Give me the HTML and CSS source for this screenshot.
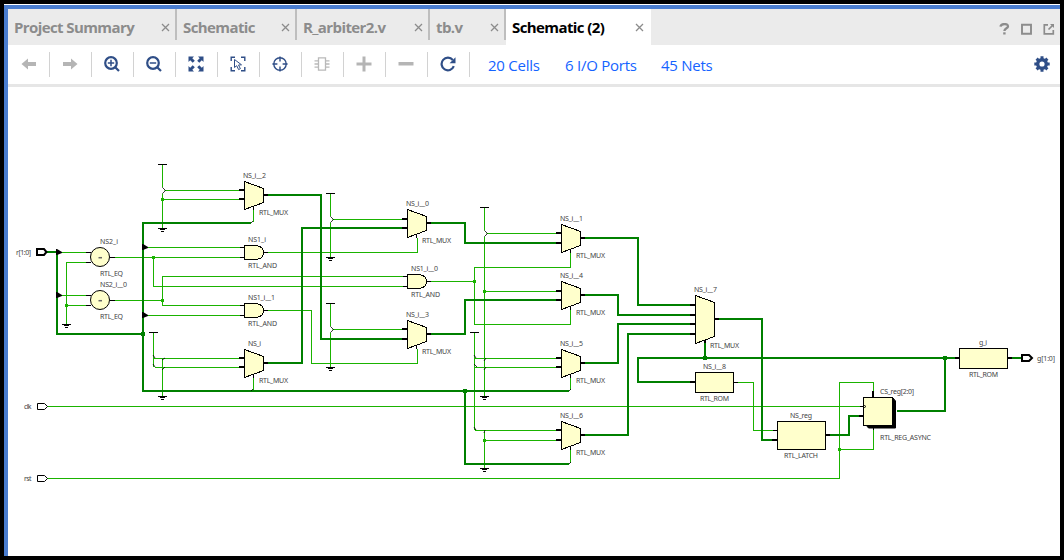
FILE: index.html
```html
<!DOCTYPE html>
<html lang="en">
<head>
<meta charset="utf-8">
<title>Schematic (2)</title>
<link rel="stylesheet" href="styles.css">
</head>
<body>
<main class="window">
  <header class="tabs">
    <div class="tab tab-summary"><span>Project Summary</span><svg class="close" viewBox="0 0 9 9"><path d="M1 1l7 7M8 1l-7 7"/></svg></div>
    <div class="tab tab-schematic"><span>Schematic</span><svg class="close" viewBox="0 0 9 9"><path d="M1 1l7 7M8 1l-7 7"/></svg></div>
    <div class="tab tab-arbiter"><span>R_arbiter2.v</span><svg class="close" viewBox="0 0 9 9"><path d="M1 1l7 7M8 1l-7 7"/></svg></div>
    <div class="tab tab-tb"><span>tb.v</span><svg class="close" viewBox="0 0 9 9"><path d="M1 1l7 7M8 1l-7 7"/></svg></div>
    <div class="tab tab-active"><span>Schematic (2)</span><svg class="close" viewBox="0 0 9 9"><path d="M1 1l7 7M8 1l-7 7"/></svg></div>
    <div class="window-actions">
      <svg width="11" height="12" viewBox="0 0 11 12"><path d="M1.500 3.600C2 .2 9 .2 9 3.400 9 5.400 5.400 5.200 5.400 8" fill="none" stroke="#8c8c8c" stroke-width="2.300"/><path d="M4.200 9.300h2.400v2.200H4.200z" fill="#8c8c8c"/></svg>
      <svg width="11" height="12" viewBox="0 0 11 12"><path d="M1 1.800h9v9H1z" fill="none" stroke="#8c8c8c" stroke-width="1.900"/></svg>
      <svg width="12" height="12" viewBox="0 0 12 12"><path d="M5 1.800H1.300v9h9V7M5.500 6.500l4-4" fill="none" stroke="#8c8c8c" stroke-width="1.700"/><path d="M7 1h4v4z" fill="#8c8c8c"/></svg>
    </div>
  </header>
  <nav class="toolbar">
    <div class="tool"><svg viewBox="0 0 16 16"><path class="off" d="M.5 8L7 2.500V6h8v4H7v3.500z"/></svg></div>
    <div class="tool"><svg viewBox="0 0 16 16"><path class="off" d="M15.500 8L9 2.500V6H1v4h8v3.500z"/></svg></div>
    <div class="tool"><svg viewBox="0 0 16 16"><circle class="line" cx="7" cy="7" r="5.800"/><path class="line" d="M11.200 11.200L15 15"/><path class="line thin" d="M3.800 7h6.400M7 3.800v6.400"/></svg></div>
    <div class="tool"><svg viewBox="0 0 16 16"><circle class="line" cx="7" cy="7" r="5.800"/><path class="line" d="M11.200 11.200L15 15"/><path class="line thin" d="M3.800 7h6.400"/></svg></div>
    <div class="tool"><svg viewBox="0 0 16 16"><path class="ink" d="M.5.5H6L4.300 2.200 6.800 4.700 4.700 6.800 2.200 4.300.5 6zM15.500.5V6l-1.700-1.700-2.500 2.500-2.100-2.100 2.500-2.500L10 .5zM.5 15.500V10l1.700 1.700 2.500-2.500 2.100 2.100-2.500 2.500L6 15.500zM15.500 15.500H10l1.700-1.700-2.500-2.500 2.100-2.100 2.500 2.500L15.500 10z"/></svg></div>
    <div class="tool"><svg viewBox="0 0 16 16"><path class="line mid" d="M1.200 5V1.200H5M11 1.200h3.800V5M1.200 11v3.800H5M14.800 11v3.800H11"/><path class="line fine" d="M4.500 3.500v8l2.200-1.800 1.900 3.900 1.800-.9-1.900-3.700 3-.2z"/></svg></div>
    <div class="tool"><svg viewBox="0 0 16 16"><circle class="line mid" cx="8" cy="8" r="6.200"/><path class="line mid" d="M8 .4v5M8 10.600v5M.4 8h5M10.600 8h5"/></svg></div>
    <div class="tool"><svg viewBox="0 0 16 16"><path class="chip" d="M4.500 1.800h7v12.400h-7zM4 4.800H.5M4 8H.5M4 11.200H.5M12 4.800h3.500M12 8h3.500M12 11.200h3.500"/></svg></div>
    <div class="tool"><svg viewBox="0 0 16 16"><path class="off" d="M6.500.5h3v6h6v3h-6v6h-3v-6h-6v-3h6z"/></svg></div>
    <div class="tool"><svg viewBox="0 0 16 16"><path class="off" d="M.5 6h15v3.500H.5z"/></svg></div>
    <div class="tool"><svg viewBox="0 0 16 16"><path class="line" d="M13.800 10.200A6.300 6.300 0 1 1 12.800 4"/><path class="ink" d="M15.500 1.300v5.900H9.600z"/></svg></div>
    <div class="counts"><a class="cells">20 Cells</a><a class="ports">6 I/O Ports</a><a>45 Nets</a></div>
    <svg class="gear" viewBox="0 0 16 16"><circle cx="8" cy="8" r="4.300" fill="none" stroke="#2f4e87" stroke-width="3.400"/><path d="M8 .3v3M8 12.700v3M.3 8h3M12.700 8h3M2.600 2.600l2 2M11.400 11.400l2 2M2.600 13.400l2-2M11.400 4.600l2-2" stroke="#2f4e87" stroke-width="3"/></svg>
  </nav>
  <svg class="canvas" viewBox="8 87 1052 469">
    <defs>
      <g id="mux"><path class="cell" d="M.5.5V28.500L19.500 21.500V7.500z"/><path class="bus-pin" d="M20 14h4"/><path class="pin" d="M9.500 25v4"/></g>
      <g id="and"><path class="cell" d="M.5.5h12q7 1 7 7t-7 7H.5z"/><path class="pin" d="M-4 2.500h4M-4 12.500h4M20 7.500h4"/></g>
      <g id="eq"><circle class="cell round" r="9.500"/><path class="pin" d="M-14-4.500h5M-14 5.500h5M10 .5h5"/><path class="equals" d="M-1.500 .7h3.500"/></g>
      <g id="vcc"><path class="pin" d="M-4.500 0h9"/></g>
      <g id="gnd"><path class="pin" d="M-4.500 0h9M-2.500 1h5M-1.500 3h3"/></g>
      <g id="dot"><path class="dot" d="M-1.500-1.500h3v3h-3z"/></g>
      <g id="tap"><path d="M0-3h1L6 0v1L1 3H0z"/></g>
      <g id="split"><path class="gap" d="M-1-3h3v6h-3z"/><path class="rip" d="M0-3L3 0 0 3"/></g>
      <g id="port"><path class="port" d="M0-3h7l3 3-3 3H0z"/></g>
    </defs>

    <g class="net">
      <path d="M60 252.500H87M87 262.500H66.500V324M60 295.500H87M66.500 305.500H87M114 257.500H241M153.500 257.500V286.500H404M114 300.500H162.500M241 305.500H162.500V276.500H404M146 247.500H241M146 315.500H241"/>
      <path d="M162.500 165V229M163 190.500H240M162.500 199.500H240M253.500 209V222M153.500 333V367M153.500 358.500H240M155 367.500H240M162.500 359V396M253.500 378V391"/>
      <path d="M330.500 194V257M332 219.500H403M268 252.500H417.500V238M330.500 304V367M332 329.500H403M268 310.500H311.500V363.500H417.500V349M431 281.500H474.500M570.500 253V267.500H474.500V324.500H570.500V310"/>
      <path d="M484.500 208V396M486 233.500H557M484.500 291.500H557M474.500 333V429L476 430.500H557M475 358.500H557M475 367.500H557M484.500 432V468M484.500 440.500H557M570.500 378V390M570.500 450V463"/>
      <path d="M47 406.500H861M47 478.500H839.500V382.500H873.500V392M839.500 449.500H873.500V430M738 382.500H753.500V430.500H773"/>
    </g>
    <g class="bus">
      <path d="M47 252H57V334H143M251 223H143V391H569M465 391V464H569"/>
      <path d="M268 195H321V339H403M268 363H302V228H403M431 223H465V243H557M431 334H465V300H557"/>
      <path d="M585 238H638V305H691M585 295H618V315H691M585 363H618V324H691M585 435H628V334H691M719 319H762V440H773"/>
      <path d="M705 343V358M691 382H638V358H956M830 435H849V416H859M897 411H945V358M1012 358H1021"/>
    </g>

    <use href="#mux" x="244" y="181"/><use href="#mux" x="244" y="349"/>
    <use href="#mux" x="407" y="209"/><use href="#mux" x="407" y="320"/>
    <use href="#mux" x="561" y="224"/><use href="#mux" x="561" y="281"/><use href="#mux" x="561" y="349"/><use href="#mux" x="561" y="421"/>
    <use href="#and" x="244" y="245"/><use href="#and" x="244" y="303"/><use href="#and" x="407" y="274"/>
    <use href="#eq" x="100" y="257"/><use href="#eq" x="100" y="300"/>
    <path class="cell" d="M695.500 295.500V343.500L714.500 336.500V302.500zM695.500 372.500h38v20h-38zM777.500 421.500h48v28h-48zM959.500 348.500h48v20h-48z"/>
    <path d="M866 425h27v-27l2.500 3v27h-27z" stroke="#000"/>
    <path class="cell" d="M863.500 397.500h29v28h-29z"/>
    <path class="rip" d="M863 404.500l3 2-3 2"/>
    <path class="bus-pin" d="M239 190h5M239 199h5M239 358h5M239 367h5M402 219h5M402 228h5M402 329h5M402 339h5M556 233h5M556 243h5M556 291h5M556 300h5M556 358h5M556 367h5M556 430h5M556 440h5M690 305h5M690 315h5M690 324h5M690 334h5M715 319h4M705 340v3M690 382h5M772 440h5M826 435h4M859 416h4M873 391v6M955 358h4M1008 358h4"/>
    <path class="pin" d="M734 382.500h4M773 430.500h4M860 406.500h4M873.500 428v2"/>
    <path class="rip" d="M251 223l2-2M251 391l2-2M569 391l2-2M569 464l2-2M153 355l2 3M153 364l2 3M162 360l3-2M162 370l3-3M474 355l2 3M474 364l3 3M484 361l2-3M484 370l2-3M474 427l2 3M484 433l1-3"/>

    <use href="#vcc" x="162.500" y="164.500"/><use href="#vcc" x="153.500" y="332.500"/><use href="#vcc" x="330.500" y="193.500"/><use href="#vcc" x="330.500" y="303.500"/><use href="#vcc" x="484.500" y="207.500"/><use href="#vcc" x="474.500" y="332.500"/>
    <use href="#gnd" x="66.500" y="324.500"/><use href="#gnd" x="162.500" y="228.500"/><use href="#gnd" x="162.500" y="396.500"/><use href="#gnd" x="330.500" y="257.500"/><use href="#gnd" x="330.500" y="367.500"/><use href="#gnd" x="484.500" y="396.500"/><use href="#gnd" x="484.500" y="468.500"/>
    <use href="#split" x="162.500" y="190.500"/><use href="#split" x="330.500" y="219.500"/><use href="#split" x="330.500" y="329.500"/><use href="#split" x="484.500" y="233.500"/>
    <use href="#dot" x="162.500" y="199.500"/><use href="#dot" x="153.500" y="257.500"/><use href="#dot" x="162.500" y="300.500"/><use href="#dot" x="66.500" y="305.500"/><use href="#dot" x="474.500" y="281.500"/><use href="#dot" x="484.500" y="291.500"/><use href="#dot" x="484.500" y="440.500"/><use href="#dot" x="839.500" y="449.500"/>
    <path class="bus-dot" d="M141 332h4v4h-4zM463 389h4v4h-4zM703 356h4v4h-4zM943 356h4v4h-4z"/>
    <use href="#tap" x="56" y="252"/><use href="#tap" x="56" y="295"/><use href="#tap" x="142" y="247"/><use href="#tap" x="142" y="315"/>
    <use href="#port" x="37.500" y="406.500"/><use href="#port" x="37.500" y="478.500"/>
    <path class="port bold" d="M37 249h7l2.500 3-2.500 3h-7zM1022 355h7l3 3-3 3h-7z"/>

    <g class="labels">
      <text x="16" y="255" textLength="15">r[1:0]</text><text x="24" y="409" textLength="7.500">clk</text><text x="24" y="481" textLength="7.500">rst</text>
      <text x="100" y="244" textLength="18">NS2_i</text><text x="100" y="276" textLength="23">RTL_EQ</text>
      <text x="100" y="287" textLength="27">NS2_i__0</text><text x="100" y="319" textLength="23">RTL_EQ</text>
      <text x="243" y="178" textLength="23">NS_i__2</text><text x="259" y="215" textLength="29">RTL_MUX</text>
      <text x="248" y="242" textLength="18">NS1_i</text><text x="248" y="268" textLength="29">RTL_AND</text>
      <text x="248" y="300" textLength="27">NS1_i__1</text><text x="248" y="326" textLength="29">RTL_AND</text>
      <text x="248" y="346" textLength="13">NS_i</text><text x="259" y="383" textLength="29">RTL_MUX</text>
      <text x="406" y="206" textLength="23">NS_i__0</text><text x="422" y="243" textLength="29">RTL_MUX</text>
      <text x="411" y="271" textLength="27">NS1_i__0</text><text x="411" y="297" textLength="29">RTL_AND</text>
      <text x="406" y="317" textLength="23">NS_i__3</text><text x="422" y="354" textLength="29">RTL_MUX</text>
      <text x="560" y="221" textLength="23">NS_i__1</text><text x="576" y="258" textLength="29">RTL_MUX</text>
      <text x="560" y="278" textLength="23">NS_i__4</text><text x="576" y="315" textLength="29">RTL_MUX</text>
      <text x="560" y="346" textLength="23">NS_i__5</text><text x="576" y="383" textLength="29">RTL_MUX</text>
      <text x="560" y="418" textLength="23">NS_i__6</text><text x="576" y="455" textLength="29">RTL_MUX</text>
      <text x="694" y="292" textLength="23">NS_i__7</text><text x="710" y="348" textLength="29">RTL_MUX</text>
      <text x="703" y="369" textLength="23">NS_i__8</text><text x="700" y="401" textLength="29">RTL_ROM</text>
      <text x="790" y="418" textLength="22">NS_reg</text><text x="784" y="458" textLength="34">RTL_LATCH</text>
      <text x="880" y="394" textLength="34">CS_reg[2:0]</text><text x="880" y="440" textLength="51">RTL_REG_ASYNC</text>
      <text x="979" y="345" textLength="8">g_i</text><text x="969" y="377" textLength="29">RTL_ROM</text><text x="1037" y="361" textLength="18">g[1:0]</text>
    </g>
  </svg>
</main>
</body>
</html>
```
FILE: styles.css
```css
* { box-sizing: border-box; }
body {
  margin: 0;
  width: 1064px;
  height: 560px;
  padding: 4px;
  background: #000;
  font-family: "Open Sans", "Noto Sans", sans-serif;
}
.window {
  display: flex;
  flex-direction: column;
  height: 552px;
  border-top: 1px solid #fff;
  background: #4a7dcf;
  padding: 4px 0 0 4px;
}
.tabs {
  display: flex;
  height: 36px;
  background: #ebebeb;
  font-size: 15px;
  font-weight: 700;
  line-height: 36px;
  color: #8c8c8c;
}
.tab {
  display: flex;
  align-items: center;
  justify-content: space-between;
  height: 36px;
  padding: 0 7px 0 6px;
  white-space: nowrap;
  background: linear-gradient(#bebebe, #bebebe) no-repeat 100% 0 / 2px 31px;
}
.tab span { letter-spacing: -0.6px; }
.tab-summary { width: 169px; }
.tab-schematic { width: 120px; }
.tab-arbiter { width: 133px; }
.tab-tb { width: 76px; }
.tab-active { width: 145px; background: #fff; color: #000; }
.close { width: 9px; height: 9px; fill: none; stroke: #8c8c8c; stroke-width: 1.3; }
.window-actions { display: flex; gap: 11px; margin-left: auto; padding: 14px 5px 0 0; height: 26px; }
.toolbar {
  display: flex;
  align-items: center;
  height: 42px;
  padding-right: 10px;
  background: #fff;
  border-bottom: 3px solid #e6e6e6;
}
.tool { display: grid; place-items: center; width: 42px; height: 25px; border-right: 1px solid #d2d2d2; }
.tool svg, .gear { width: 16px; height: 16px; margin-bottom: 1px; }
.tool svg { margin-right: 1px; }
.tool:first-child svg { margin-right: 0; }
.off { fill: #b5b5b5; }
.ink { fill: #2f4e87; }
.line { fill: none; stroke: #2f4e87; stroke-width: 2.2; }
.mid { stroke-width: 1.4; }
.thin { stroke-width: 1.5; }
.fine { stroke-width: 1; }
.chip { fill: none; stroke: #b9b9b9; stroke-width: 1.3; }
.counts { display: flex; padding-left: 18px; font-size: 15px; line-height: 24px; letter-spacing: -0.25px; color: #1463ff; white-space: nowrap; }
.cells { width: 77px; }
.ports { width: 96px; }
.gear { margin-left: auto; }
.canvas { display: block; width: 1052px; height: 469px; flex: none; background: #fff; }
.net, .bus { fill: none; shape-rendering: crispEdges; }
.net { stroke: #1ab300; stroke-width: 1; }
.bus { stroke: #008000; stroke-width: 2; }
.cell { fill: #ffffcc; stroke: #000; stroke-width: 1; shape-rendering: crispEdges; }
.round { shape-rendering: auto; }
.pin { fill: none; stroke: #000; stroke-width: 1; shape-rendering: crispEdges; }
.bus-pin { fill: none; stroke: #000; stroke-width: 2; shape-rendering: crispEdges; }
.equals { stroke: #666; stroke-width: 1.5; }
.dot { fill: #1ab300; }
.bus-dot { fill: #008000; }
.gap { fill: #fff; }
.rip { fill: none; stroke: #000; stroke-width: 0.8; }
.port { fill: #fff; stroke: #000; stroke-width: 1; }
.bold { stroke-width: 2; }
.labels { font-family: "Noto Sans", sans-serif; font-size: 7px; fill: #444; }
```
